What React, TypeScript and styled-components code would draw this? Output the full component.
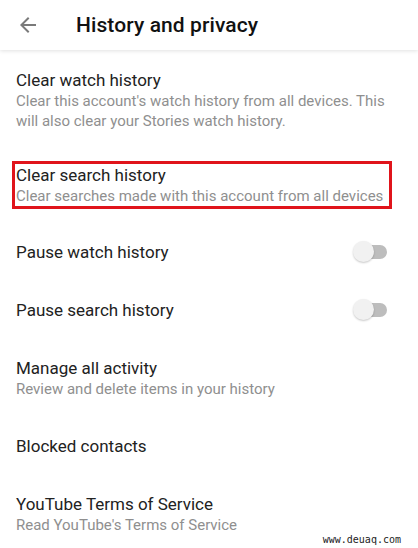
import React from "react";
import styled, { createGlobalStyle } from "styled-components";

const Global = createGlobalStyle`
  html, body { margin: 0; padding: 0; background: #ffffff; }
  body { font-family: Roboto, "Noto Sans", Arial, sans-serif; -webkit-font-smoothing: antialiased; }
  * { box-sizing: border-box; }
`;

const Screen = styled.div`
  position: relative;
  width: 418px;
  height: 548px;
  overflow: hidden;
  background: #ffffff;
`;

const Header = styled.header`
  display: flex;
  align-items: center;
  height: 50px;
  padding-left: 16px;
  box-shadow: 0 1px 4px rgba(0, 0, 0, 0.12);
  position: relative;
  z-index: 1;
`;

const BackButton = styled.button`
  display: flex;
  align-items: center;
  justify-content: center;
  width: 24px;
  height: 24px;
  padding: 0;
  border: none;
  background: none;
  color: #7a7a7a;
  margin-right: 36px;
`;

const Title = styled.h1`
  margin: 0;
  font-size: 21px;
  font-weight: 500;
  color: #111111;
  letter-spacing: 0.1px;
`;

const List = styled.div`
  display: flex;
  flex-direction: column;
  padding-top: 1px;
`;

const Item = styled.div<{ $highlight?: boolean }>`
  padding: ${(p) => (p.$highlight ? "12px 26px 14px 12px" : "18px 16px")};
`;

const Frame = styled.div<{ $highlight?: boolean }>`
  display: flex;
  align-items: center;
  justify-content: space-between;
  border: ${(p) => (p.$highlight ? "3px solid #e0141b" : "none")};
  padding-left: ${(p) => (p.$highlight ? "1px" : "0")};
`;

const Texts = styled.div`
  display: flex;
  flex-direction: column;
`;

const ItemTitle = styled.div`
  font-size: 17px;
  line-height: 22px;
  color: #222222;
`;

const ItemSub = styled.div`
  font-size: 15px;
  line-height: 20px;
  color: #8f8f8f;
  padding-right: 4px;
`;

const Toggle = styled.div`
  position: relative;
  width: 36px;
  height: 22px;
  margin-right: 13px;
  flex-shrink: 0;
`;

const Track = styled.div`
  position: absolute;
  left: 8px;
  top: 4px;
  width: 26px;
  height: 14px;
  border-radius: 7px;
  background: #bdbdbd;
`;

const Thumb = styled.div`
  position: absolute;
  left: 0;
  top: 0;
  width: 21px;
  height: 21px;
  border-radius: 50%;
  background: #f1f1f1;
  box-shadow: 0 1px 2px rgba(0, 0, 0, 0.22);
`;

const Watermark = styled.div`
  position: absolute;
  right: 17px;
  bottom: 3px;
  font-family: "DejaVu Sans Mono", "Liberation Mono", monospace;
  font-size: 10px;
  color: #222222;
`;

type Row = { title: string; sub?: string; toggle?: boolean; highlight?: boolean };

const rows: Row[] = [
  {
    title: "Clear watch history",
    sub: "Clear this account's watch history from all devices. This will also clear your Stories watch history.",
  },
  {
    title: "Clear search history",
    sub: "Clear searches made with this account from all devices",
    highlight: true,
  },
  { title: "Pause watch history", toggle: true },
  { title: "Pause search history", toggle: true },
  { title: "Manage all activity", sub: "Review and delete items in your history" },
  { title: "Blocked contacts" },
  { title: "YouTube Terms of Service", sub: "Read YouTube's Terms of Service" },
];

export default function App() {
  return (
    <Screen>
      <Global />
      <Header>
        <BackButton aria-label="Back">
          <svg width="24" height="24" viewBox="0 0 24 24" fill="currentColor">
            <path d="M20 11H7.83l5.59-5.59L12 4l-8 8 8 8 1.41-1.41L7.83 13H20v-2z" />
          </svg>
        </BackButton>
        <Title>History and privacy</Title>
      </Header>
      <List>
        {rows.map((r) => (
          <Item key={r.title} $highlight={r.highlight}>
            <Frame $highlight={r.highlight}>
              <Texts>
                <ItemTitle>{r.title}</ItemTitle>
                {r.sub && <ItemSub>{r.sub}</ItemSub>}
              </Texts>
              {r.toggle && (
                <Toggle>
                  <Track />
                  <Thumb />
                </Toggle>
              )}
            </Frame>
          </Item>
        ))}
      </List>
      <Watermark>www.deuaq.com</Watermark>
    </Screen>
  );
}
